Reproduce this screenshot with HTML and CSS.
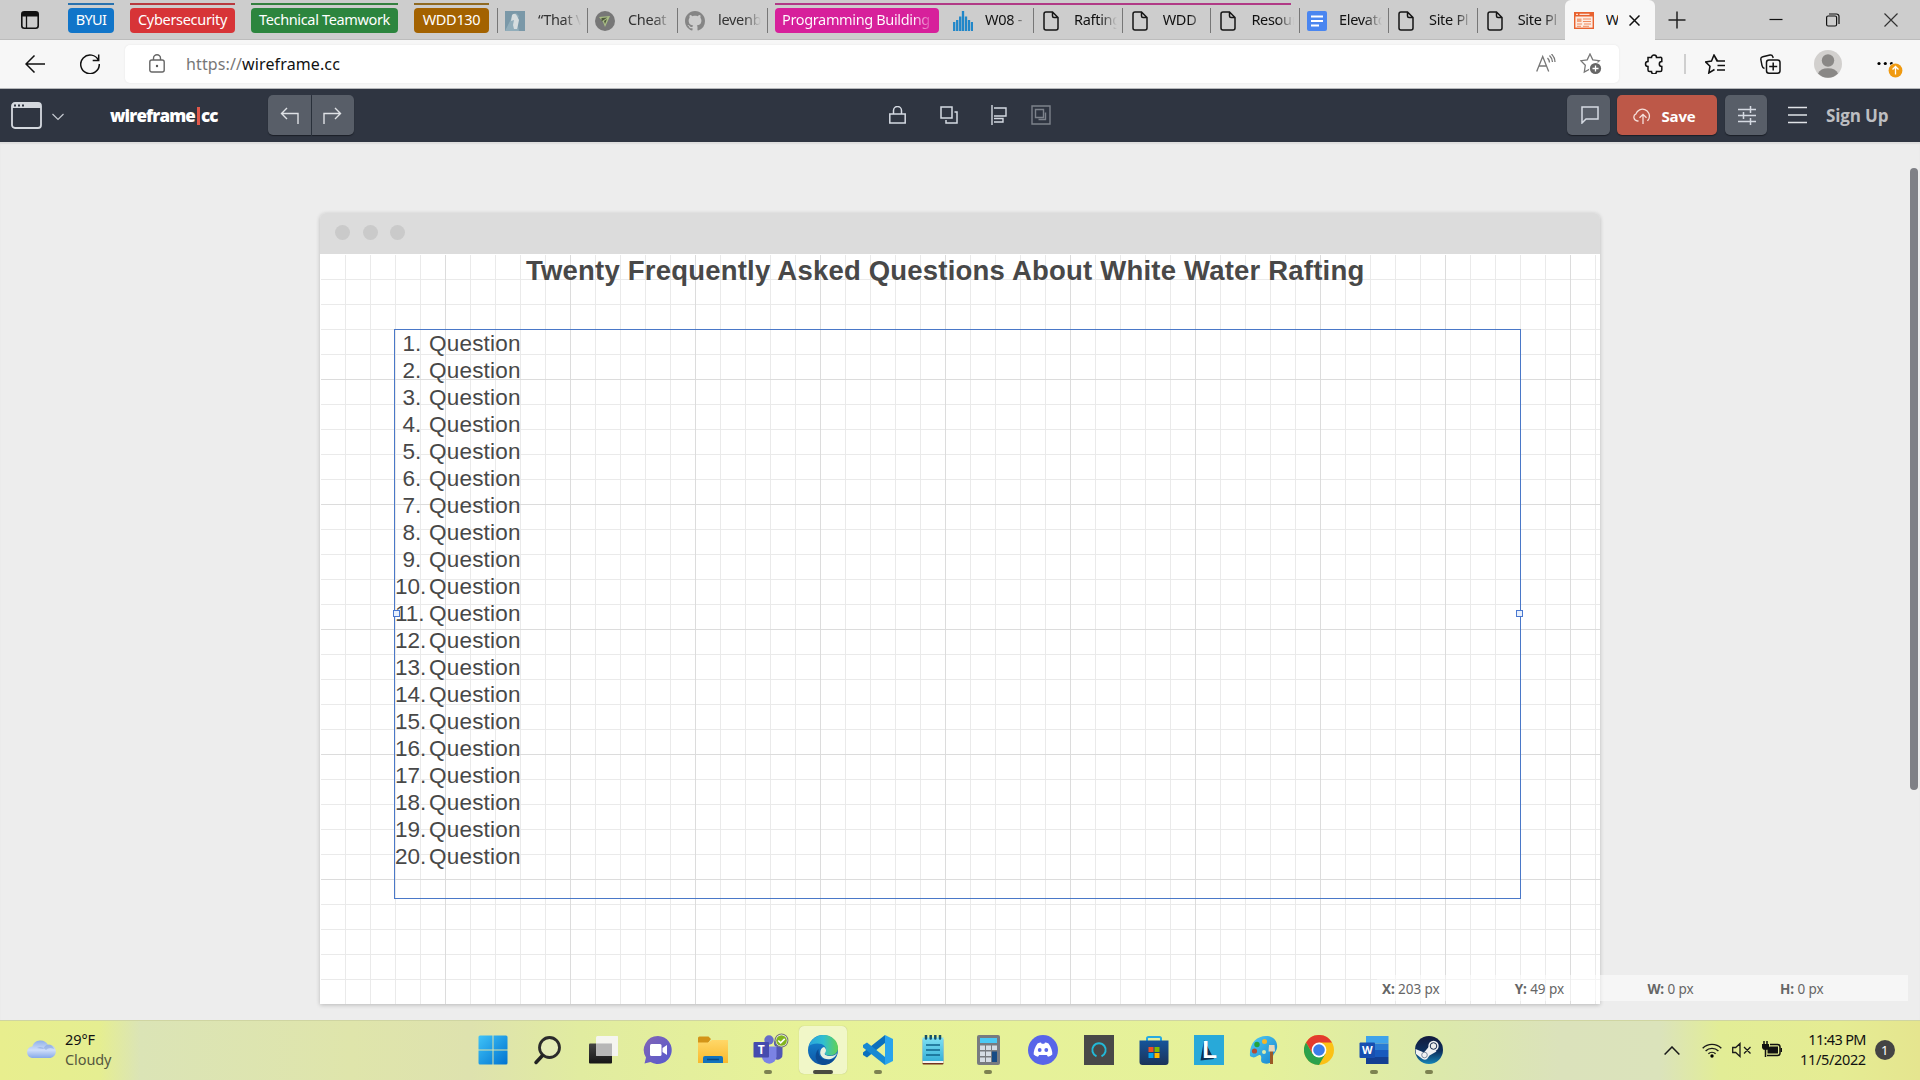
FILE: index.html
```html
<!DOCTYPE html>
<html lang="en">
<head>
<meta charset="utf-8">
<title>Wireframe.cc</title>
<link rel="stylesheet" href="styles.css">
</head>
<body>
<svg width="0" height="0" class="defs" aria-hidden="true">
  <defs>
    <symbol id="page" viewBox="0 0 16 20"><path d="M3 1h6.500L15 6.500V17a2 2 0 0 1-2 2H3a2 2 0 0 1-2-2V3a2 2 0 0 1 2-2zM9.500 1v4a1.500 1.500 0 0 0 1.500 1.500h4" fill="none" stroke="#151515" stroke-width="1.500"/></symbol>
    <linearGradient id="gWin" x1="0" y1="0" x2="1" y2="1"><stop offset="0" stop-color="#3fc3f8"/><stop offset="1" stop-color="#0073d0"/></linearGradient>
    <linearGradient id="gDark" x1="0" y1="0" x2="0" y2="1"><stop offset="0" stop-color="#444"/><stop offset="1" stop-color="#161616"/></linearGradient>
    <linearGradient id="gCloud" x1="0" y1="0" x2="0" y2="1"><stop offset="0" stop-color="#8fb0e8"/><stop offset=".55" stop-color="#cfdefa"/><stop offset="1" stop-color="#86a9ea"/></linearGradient>
    <linearGradient id="gChat" x1="0" y1="0" x2="1" y2="1"><stop offset="0" stop-color="#8366b5"/><stop offset="1" stop-color="#5558cf"/></linearGradient>
    <linearGradient id="gFolder" x1="0" y1="0" x2="0" y2="1"><stop offset="0" stop-color="#ffd768"/><stop offset="1" stop-color="#f9b92c"/></linearGradient>
    <linearGradient id="gEdge1" x1="0" y1="0" x2="1" y2="0"><stop offset="0" stop-color="#2aa5dd"/><stop offset=".5" stop-color="#30bfd0"/><stop offset="1" stop-color="#62d152"/></linearGradient>
    <linearGradient id="gEdge2" x1="0" y1="0" x2="0" y2="1"><stop offset="0" stop-color="#1689d4"/><stop offset="1" stop-color="#0f56a5"/></linearGradient>
    <linearGradient id="gNote" x1="0" y1="0" x2="0" y2="1"><stop offset="0" stop-color="#7fe0f3"/><stop offset="1" stop-color="#36b0d8"/></linearGradient>
    <linearGradient id="gStore" x1="0" y1="0" x2="0" y2="1"><stop offset="0" stop-color="#15549b"/><stop offset="1" stop-color="#1b3359"/></linearGradient>
    <linearGradient id="gPaint" x1="0" y1="0" x2="1" y2="1"><stop offset="0" stop-color="#52cdf2"/><stop offset="1" stop-color="#1483cf"/></linearGradient>
    <linearGradient id="gSteam" x1="0" y1="0" x2="0" y2="1"><stop offset="0" stop-color="#131a3c"/><stop offset=".55" stop-color="#0c2f5e"/><stop offset="1" stop-color="#1585b8"/></linearGradient>
  </defs>
</svg>

<header class="tabs">
  <svg class="tabs-menu" width="18" height="18" viewBox="0 0 18 18"><rect x=".8" y=".8" width="16.400" height="16.400" rx="2.500" fill="none" stroke="#111" stroke-width="1.600"/><path d="M1 1h16v4.500H1z" fill="#111"/><path d="M5.500 5v12" stroke="#111" stroke-width="1.300"/></svg>
  <div class="group blue"><span>BYUI</span></div>
  <div class="group red"><span>Cybersecurity</span></div>
  <div class="group green"><span>Technical Teamwork</span></div>
  <div class="group gold"><span>WDD130</span></div>
  <div class="tab dim first">
    <svg width="20" height="20" viewBox="0 0 20 20"><rect width="20" height="20" fill="#7a98a8"/><path d="M0 20L8 4l3-2 3 3-2 5 2 10z" fill="#91adba"/><path d="M7 4q3-3 5 1l2 4-1 5-1 4H9l-1-4 1-5-3 1z" fill="#d6dddf"/></svg>
    <span>“That V</span>
  </div>
  <div class="tab dim">
    <svg width="20" height="20" viewBox="0 0 20 20"><circle cx="10" cy="10" r="10" fill="#777"/><path d="M4 6l11-1-5 11-2-5z" fill="#a9bd86"/><path d="M6.500 7l6-.5-6 4zM9 10l3-2-2 5z" fill="#4f5a3d"/></svg>
    <span>Cheat</span>
  </div>
  <div class="tab dim">
    <svg width="20" height="20" viewBox="0 0 16 16"><path fill="#858585" d="M8 0C3.580 0 0 3.580 0 8c0 3.540 2.290 6.530 5.470 7.590.4.070.55-.17.55-.38 0-.19-.01-.82-.01-1.490-2.010.37-2.530-.49-2.690-.94-.09-.23-.48-.94-.82-1.130-.28-.15-.68-.52-.01-.53.63-.01 1.080.58 1.230.82.72 1.210 1.870.87 2.330.66.070-.52.28-.87.51-1.070-1.780-.2-3.640-.89-3.640-3.950 0-.87.31-1.590.82-2.150-.08-.2-.36-1.020.08-2.120 0 0 .67-.21 2.200.82.64-.18 1.320-.27 2-.27s1.360.09 2 .27c1.530-1.040 2.200-.82 2.200-.82.44 1.100.16 1.920.08 2.120.51.56.82 1.270.82 2.150 0 3.070-1.870 3.750-3.650 3.950.29.25.54.73.54 1.480 0 1.070-.01 1.930-.01 2.200 0 .21.15.46.55.38A8.010 8.010 0 0 0 16 8c0-4.420-3.580-8-8-8z"/></svg>
    <span>levenb</span>
  </div>
  <div class="pink-run">
    <div class="group pink"><span>Programming Building</span></div>
    <div class="tab short">
      <svg width="20" height="20" viewBox="0 0 20 20"><path d="M1.200 20v-9M4.200 20V9M7.200 20V5.500M10 20V0M13 20V5.500M16 20V9M19 20v-9" stroke="#2187c9" stroke-width="2.300"/></svg>
      <span>W08 -</span>
    </div>
    <div class="tab doc"><svg width="16" height="20"><use href="#page"/></svg><span>Rafting</span></div>
    <div class="tab doc"><svg width="16" height="20"><use href="#page"/></svg><span>WDD</span></div>
    <div class="tab doc"><svg width="16" height="20"><use href="#page"/></svg><span>Resour</span></div>
  </div>
  <div class="tab google">
    <svg width="20" height="20" viewBox="0 0 20 20"><rect width="20" height="20" rx="2" fill="#4a86f0"/><path d="M4 5.500h12M4 10h12M4 14.500h8" stroke="#fff" stroke-width="2"/></svg>
    <span>Elevato</span>
  </div>
  <div class="tab doc"><svg width="16" height="20"><use href="#page"/></svg><span>Site Pl</span></div>
  <div class="tab doc last"><svg width="16" height="20"><use href="#page"/></svg><span>Site Pl</span></div>
  <div class="tab-active">
    <svg width="20" height="17" viewBox="0 0 20 17"><rect x=".7" y=".7" width="18.600" height="15.600" fill="#fdebe2" stroke="#e8622f" stroke-width="1.400"/><path d="M0 0h20v4.500H0z" fill="#e8622f"/><path d="M2 2.300h2M5.500 2.300h10" stroke="#fff" stroke-width="1"/><path d="M3 6.500h4.500V10H3z" fill="#f3a27c"/><path d="M9 7h8M9 9.500h8M3 12h5M10 12h7M3 14.300h4M9 14.300h6" stroke="#f08a5e"/></svg>
    <span>W</span>
    <svg width="11" height="11" viewBox="0 0 11 11"><path d="M.5.5l10 10M10.500.5l-10 10" stroke="#111" stroke-width="1.500"/></svg>
  </div>
  <svg class="plus" width="18" height="18" viewBox="0 0 18 18"><path d="M9 .5v17M.5 9h17" stroke="#222" stroke-width="1.500"/></svg>
  <svg class="win-min" width="14" height="14" viewBox="0 0 14 14"><path d="M.5 6.500h13" stroke="#111" stroke-width="1.200"/></svg>
  <svg class="win-max" width="14" height="14" viewBox="0 0 14 14"><rect x=".6" y="3" width="10" height="10" rx="1.500" fill="none" stroke="#111" stroke-width="1.200"/><path d="M3 1h7.500A2.500 2.500 0 0 1 13 3.500V11" fill="none" stroke="#111" stroke-width="1.200"/></svg>
  <svg class="win-close" width="14" height="14" viewBox="0 0 14 14"><path d="M.5.5l13 13M13.500.5l-13 13" stroke="#333" stroke-width="1.200"/></svg>
</header>

<nav class="toolbar">
  <svg class="back" width="20" height="18" viewBox="0 0 20 18"><path d="M20 9H1M9.500.5L1 9l8.500 8.500" fill="none" stroke="#111" stroke-width="1.500"/></svg>
  <svg class="reload" width="20" height="20" viewBox="0 0 20 20"><path d="M18.500 6.500A9.300 9.300 0 1 0 19.300 10M18.700.5v6h-6" fill="none" stroke="#111" stroke-width="1.500"/></svg>
  <div class="address">
    <svg width="16" height="19" viewBox="0 0 16 19"><rect x=".8" y="6" width="14.400" height="12" rx="2" fill="none" stroke="#666" stroke-width="1.400"/><path d="M4.500 6V4.300a3.500 3.500 0 0 1 7 0V6" fill="none" stroke="#666" stroke-width="1.400"/><circle cx="8" cy="12" r="1.200" fill="#555"/></svg>
    <span class="url"><i>https://</i>wireframe.cc</span>
    <svg class="read" width="20" height="18" viewBox="0 0 20 18"><path d="M.7 17.500L6.700 2.500l6 15M3 12h7.500M11.500 4q2 2 2 4.500M13.500 1.500q3 3 3 6.500M15.500 0q3.500 3.500 3.500 8" fill="none" stroke="#777" stroke-width="1.300"/></svg>
    <svg class="addstar" width="22" height="22" viewBox="0 0 22 22"><path d="M10 1l2.800 5.800 6.500.9-4.700 4.600 1 6.500L10 16l-5.700 3 1-6.700L.8 7.700l6.400-.9z" fill="none" stroke="#777" stroke-width="1.300"/><circle cx="15.500" cy="15.500" r="6.600" fill="#fff"/><circle cx="15.500" cy="15.500" r="5.600" fill="#666"/><path d="M15.500 12.500v6M12.500 15.500h6" stroke="#fff" stroke-width="1.300"/></svg>
  </div>
  <svg class="puzzle" width="20" height="20" viewBox="0 0 20 20"><path d="M4 3.500h3.500a2.500 2.500 0 0 1 5 0H15.500A1.500 1.500 0 0 1 17.800 5V7.500a2.500 2.500 0 0 0 0 5V16a1.500 1.500 0 0 1-1.500 1.500h-3.800a2.500 2.500 0 0 1-5 0H5.500A1.500 1.500 0 0 1 4 16v-3.500a2.500 2.500 0 0 1 0-5z" fill="none" stroke="#111" stroke-width="1.500"/></svg>
  <div class="divider"></div>
  <svg class="favs" width="20" height="20" viewBox="0 0 20 20"><path d="M12.500 7L9 1 6.500 7l-6 .9L5 12.200 3.800 19l5.700-3.500M9 1.200l3 5.800h8M12.500 11.500H20M12 16h8" fill="none" stroke="#111" stroke-width="1.500"/></svg>
  <svg class="coll" width="21" height="20" viewBox="0 0 21 20"><path d="M4.500 14.500Q2.500 14 2 11.500L.8 5.500Q.5 3.200 2.800 2.700L10 1q2.300-.3 2.800 1.800L13.200 4" fill="none" stroke="#111" stroke-width="1.400"/><rect x="6.500" y="6" width="13.500" height="13.200" rx="2.500" fill="#f7f7f7" stroke="#111" stroke-width="1.500"/><path d="M13.200 8.500v8M9.200 12.500h8" stroke="#111" stroke-width="1.500"/></svg>
  <svg class="avatar" width="28" height="28" viewBox="0 0 28 28"><circle cx="14" cy="14" r="14" fill="#d2d0ce"/><circle cx="14" cy="10.500" r="6.200" fill="#8a8886"/><path d="M4 23.500a10.500 7.500 0 0 1 20 0A14 14 0 0 1 4 23.500z" fill="#8a8886"/></svg>
  <svg class="more" width="28" height="28" viewBox="0 0 28 28"><circle cx="3" cy="13.500" r="1.600"/><circle cx="9.300" cy="13.500" r="1.600"/><circle cx="15.500" cy="13.500" r="1.600"/><circle cx="19.500" cy="20.500" r="7.600" fill="#f7f7f7"/><circle cx="19.500" cy="20.500" r="6.900" fill="#f09a10"/><path d="M19.500 24.500v-7.500M16.500 19.500l3-3 3 3" fill="none" stroke="#fff" stroke-width="1.300"/></svg>
</nav>

<div class="appbar">
  <svg class="frame" width="31" height="27" viewBox="0 0 31 27"><rect x="1" y="1" width="29" height="25" rx="3" fill="none" stroke="#d5d9df" stroke-width="1.800"/><path d="M1 2h29v4H1z" fill="#d5d9df"/><path d="M3 3.500h2M7 3.500h2M11 3.500h2" stroke="#2f3541" stroke-width="2"/></svg>
  <svg class="caret" width="12" height="8" viewBox="0 0 12 8"><path d="M.5 1L6 6.500 11.500 1" fill="none" stroke="#c5c9d0" stroke-width="1.200"/></svg>
  <div class="brand">wireframe<b></b>cc</div>
  <div class="history">
    <button><svg width="19" height="17" viewBox="0 0 19 17"><path d="M18 17V6.500H1.500M7 1L1.500 6.500 7 12" fill="none" stroke="#dfe2e6" stroke-width="1.400"/></svg></button>
    <button><svg width="19" height="17" viewBox="0 0 19 17"><path d="M1 17V6.500h16.500M12 1l5.500 5.500L12 12" fill="none" stroke="#dfe2e6" stroke-width="1.400"/></svg></button>
  </div>
  <svg class="lock" width="17" height="18" viewBox="0 0 17 18"><path d="M.8 8h15.400v9H.8zM4.500 8V4.500a4 4 0 0 1 8 0V8" fill="none" stroke="#d5dae2" stroke-width="1.500"/></svg>
  <svg class="dup" width="18" height="18" viewBox="0 0 18 18"><path d="M1 1h11v11H1zM14.500 6H17v11H6v-3" fill="none" stroke="#d5dae2" stroke-width="1.500"/></svg>
  <svg class="align" width="16" height="20" viewBox="0 0 16 20"><path d="M1 0v20M3 3h12v8H3M3 17h9v-3.500H3" fill="none" stroke="#d5dae2" stroke-width="1.400"/></svg>
  <svg class="grp" width="20" height="20" viewBox="0 0 20 20"><path d="M1 1h18v18H1zM4.500 4.500h8v8h-8zM14.500 7.500v7h-7" fill="none" stroke="#7d828b" stroke-width="1.400"/></svg>
  <button class="btn comment"><svg width="18" height="18" viewBox="0 0 18 18"><path d="M1 1h16v12H5l-4 4z" fill="none" stroke="#d5dae2" stroke-width="1.500"/></svg></button>
  <button class="btn save"><svg width="20" height="17" viewBox="0 0 20 17"><path d="M5.500 14H4.500A3.800 3.800 0 0 1 3 6.800 6.800 6.800 0 1 1 16 11.500L14.500 14M10 17V7.500M6.500 10.800L10 7.300l3.500 3.500" fill="none" stroke="#f6e1dc" stroke-width="1.300"/></svg><span>Save</span></button>
  <button class="btn sliders"><svg width="18" height="19" viewBox="0 0 18 19"><path d="M0 3.500h18M0 9.500h18M0 15.500h18M12.500 0v7M5.500 6v7M12.500 12v7" stroke="#d5dae2" stroke-width="1.500"/></svg></button>
  <svg class="burger" width="19" height="18" viewBox="0 0 19 18"><path d="M0 1.500h19M0 9h19M0 16.500h19" stroke="#e0e3e7" stroke-width="1.600"/></svg>
  <span class="signup">Sign Up</span>
</div>

<main class="workspace">
  <section class="mock">
    <div class="mock-bar"><i></i><i></i><i></i></div>
    <div class="grid">
      <h1>Twenty Frequently Asked Questions About White Water Rafting</h1>
      <div class="selection">
        <ol>
          <li><b>1.</b>Question</li><li><b>2.</b>Question</li><li><b>3.</b>Question</li><li><b>4.</b>Question</li>
          <li><b>5.</b>Question</li><li><b>6.</b>Question</li><li><b>7.</b>Question</li><li><b>8.</b>Question</li>
          <li><b>9.</b>Question</li><li class="wide"><b>10.</b>Question</li><li class="wide"><b>11.</b>Question</li><li class="wide"><b>12.</b>Question</li>
          <li class="wide"><b>13.</b>Question</li><li class="wide"><b>14.</b>Question</li><li class="wide"><b>15.</b>Question</li><li class="wide"><b>16.</b>Question</li>
          <li class="wide"><b>17.</b>Question</li><li class="wide"><b>18.</b>Question</li><li class="wide"><b>19.</b>Question</li><li class="wide"><b>20.</b>Question</li>
        </ol>
        <i class="handle left"></i><i class="handle right"></i>
      </div>
    </div>
  </section>
  <div class="scrollbar"></div>
  <div class="status">
    <span><b>X:</b> 203 px</span><span><b>Y:</b> 49 px</span><span><b>W:</b> 0 px</span><span><b>H:</b> 0 px</span>
  </div>
</main>

<footer class="taskbar">
  <div class="weather">
    <svg width="31" height="20" viewBox="0 0 31 20"><path d="M6 19a5.800 5.800 0 0 1 .3-11.500A8.500 8.500 0 0 1 22 6a6.600 6.600 0 0 1 2.500 13z" fill="url(#gCloud)"/><path d="M11 9q5-3 9 2 3-3.500 8-1-2-5-6-4.500-4 1-4.500 4.500" fill="#7f9fdd" opacity=".5"/></svg>
    <div><p>29°F</p><p class="soft">Cloudy</p></div>
  </div>
  <div class="apps">
    <div class="app"><svg viewBox="0 0 30 30"><path d="M.5 2a1.500 1.500 0 0 1 1.500-1.500h12.500v14H.5zM15.500.5H28A1.500 1.500 0 0 1 29.500 2v12.500h-14zM.5 15.500h14v14H2A1.500 1.500 0 0 1 .5 28zM15.500 15.500h14V28a1.500 1.500 0 0 1-1.500 1.500H15.500z" fill="url(#gWin)"/></svg></div>
    <div class="app"><svg viewBox="0 0 30 30"><circle cx="16.500" cy="12.500" r="10" fill="#e6ecc4" fill-opacity=".6" stroke="#2b2b2b" stroke-width="2.800"/><path d="M9.500 20.500L3 27.500" stroke="#222" stroke-width="3.500" stroke-linecap="round"/></svg></div>
    <div class="app"><svg viewBox="0 0 30 30"><rect x="1" y="8.500" width="23" height="20" rx="1" fill="url(#gDark)"/><rect x="8" y="1" width="22.500" height="20" rx="1.500" fill="#f5f5f5" opacity=".94"/><path d="M8 8.500h16V21H9.500A1.500 1.500 0 0 1 8 19.500z" fill="#b7b7b7"/></svg></div>
    <div class="app"><svg viewBox="0 0 30 30"><path d="M15 1a14 14 0 1 1-7.500 26L1.500 28.500 3 22.500A14 14 0 0 1 15 1z" fill="url(#gChat)"/><rect x="7" y="9" width="11.500" height="12" rx="1.500" fill="#fff"/><path d="M19.500 13l4.500-3v10l-4.500-3z" fill="#fff"/></svg></div>
    <div class="app"><svg viewBox="0 0 30 30"><path d="M0 3a1.500 1.500 0 0 1 1.500-1.500h9L13 4l-3 4H0z" fill="#d39418"/><path d="M0 7.500h10l4-2.500h16v23H0z" fill="url(#gFolder)"/><path d="M5 28v-5a2 2 0 0 1 2-2h16a2 2 0 0 1 2 2v5z" fill="#1273bd"/><path d="M9 24.500h12" stroke="#0a477f" stroke-width="1.500"/></svg></div>
    <div class="app run"><svg viewBox="0 0 30 30"><circle cx="16" cy="5" r="4.700" fill="#666cc8"/><circle cx="25" cy="8" r="4" fill="#5058b4"/><path d="M22 12h7.500v7a5 5 0 0 1-7.500 5z" fill="#5157b5"/><path d="M9 11.500h14.500v10a7.200 7.200 0 0 1-14.500 0z" fill="#7b83e4"/><rect x=".5" y="7" width="15.500" height="15.500" rx="1" fill="#454bae"/><text x="8.200" y="19" class="t-letter">T</text></svg><svg class="presence" viewBox="0 0 14 14"><circle cx="7" cy="7" r="6" fill="#fff" stroke="#777" stroke-width="1"/><circle cx="7" cy="7" r="5" fill="#82b41e"/><path d="M4 7l2.200 2.200L10 5.500" fill="none" stroke="#fff" stroke-width="1.500"/></svg></div>
    <div class="app run current"><svg viewBox="0 0 30 30"><circle cx="15" cy="15" r="15" fill="url(#gEdge2)"/><path d="M1 11C3 4 9 0 15.500 0 24 0 30 6 30 13c0 5-4 7.500-8 7.500-4 0-5.500-1.500-5-2.500 1.500-2 2-7-3.500-9C8.500 7.500 3 9 1 11z" fill="url(#gEdge1)"/><path d="M10.500 14c-1 9 6 13.500 16.500 9.500C24 28 20 30 15 30 8 29 5 20 10.500 14z" fill="#0c4b94"/><path d="M16 12c3 2 2 5 1 6-1 1 .5 3 5.500 3 3 0 5-1 6.700-3-2.500 6-8.500 7.500-13 5.500-5.500-2.500-5-10-.2-11.500z" fill="#e6f0e0"/></svg></div>
    <div class="app run"><svg viewBox="0 0 30 30"><path d="M22 0l8 4v22l-8 4z" fill="#29a4ed"/><path d="M22 0v8L4 22.500 0 20v-2.500z" fill="#0b70bd"/><path d="M22 30v-8L4 7.500 0 10v2.500z" fill="#1689d3"/></svg></div>
    <div class="app"><svg viewBox="0 0 30 30"><rect x="4.500" y="4" width="21" height="25.500" rx="1" fill="#74321e"/><rect x="4.500" y="3" width="21" height="25" fill="#f4f4f0"/><path d="M4.500 2.500h21v23.500h-21z" fill="url(#gNote)"/><path d="M8 10h14M8 15h14M8 20h14" stroke="#11648c" stroke-width="1.600"/><path d="M8 .5v3M12.700.5v3M17.300.5v3M22 .5v3" stroke="#174f67" stroke-width="2.500" stroke-linecap="round"/></svg></div>
    <div class="app run"><svg viewBox="0 0 30 30"><rect x="4" width="23" height="30" rx="2" fill="#777b80"/><path d="M7 3h17v5H7z" fill="#4bc9f4"/><path d="M7 10.500h5v4.500H7zM13 10.500h5v4.500h-5zM19 10.500h5v4.500h-5zM7 16.500h5V21H7zM13 16.500h5V21h-5zM7 22.500h5V27H7zM13 22.500h5V27h-5z" fill="#d5dce4"/><path d="M19 16.500h5V27h-5z" fill="#164b85"/></svg></div>
    <div class="app"><svg viewBox="0 0 30 30"><circle cx="15" cy="15" r="15" fill="#5865e9"/><path d="M9.500 8.500q2-1 3.500-1l.7 1.200h2.600L17 7.500q1.800 0 3.500 1 4 5.500 3.800 11-2 1.800-4.300 2.200L18.800 20h-7.600L10 21.700Q7.700 21.300 5.700 19.500q-.2-5.500 3.800-11z" fill="#fff"/><ellipse cx="11.700" cy="15" rx="1.900" ry="2.100" fill="#5865e9"/><ellipse cx="18.300" cy="15" rx="1.900" ry="2.100" fill="#5865e9"/></svg></div>
    <div class="app"><svg viewBox="0 0 30 30"><path d="M0 0h30v30H0z" fill="#484848"/><path d="M12.500 21.200a6.700 6.700 0 1 1 5 0" fill="none" stroke="#22b9d8" stroke-width="2"/></svg></div>
    <div class="app"><svg viewBox="0 0 30 30"><path d="M8 7V3.500A1.500 1.500 0 0 1 9.500 2h11A1.500 1.500 0 0 1 22 3.500V7" fill="none" stroke="#27aae1" stroke-width="2"/><path d="M.5 5.500h29V27a3 3 0 0 1-3 3h-23a3 3 0 0 1-3-3z" fill="url(#gStore)"/><path d="M9.500 12h5v5h-5z" fill="#f25022"/><path d="M15.500 12h5v5h-5z" fill="#7fba00"/><path d="M9.500 18h5v5h-5z" fill="#00a4ef"/><path d="M15.500 18h5v5h-5z" fill="#ffb900"/></svg></div>
    <div class="app"><svg viewBox="0 0 30 30"><path d="M0 0h30v30H0z" fill="#28a9d9"/><path d="M10 5L6.500 25.500 20 24z" fill="#0b3157"/><text x="8.300" y="22.500" class="l-letter">L</text></svg></div>
    <div class="app"><svg viewBox="0 0 30 30"><path d="M1 21C0 8 8 1 17 1c8 0 12 6 11 12-1 5-5 6-4 11 0 4-6 6-10 4-4-2 0-6-3-8-3-1-4 5-10 1z" fill="url(#gPaint)"/><circle cx="8" cy="9.500" r="2.700" fill="#25a33b"/><circle cx="15.500" cy="6.500" r="2.500" fill="#f4b62a"/><circle cx="5.500" cy="16" r="2.600" fill="#b44b34"/><circle cx="15" cy="17" r="2" fill="#dcebad"/><path d="M22.500 16v13" stroke="#9b5926" stroke-width="3"/><path d="M20 10h5.500l.5 6.500h-6.500z" fill="#e5d7bd"/></svg></div>
    <div class="app"><svg viewBox="0 0 30 30"><circle cx="15" cy="15" r="15" fill="#fbc116"/><path d="M2 7.500A15 15 0 0 1 28 7.500H15L8.500 18.700z" fill="#e33b2e"/><path d="M2 7.500l6.500 11.200 13 0L15 30A15 15 0 0 1 2 7.500z" fill="#2ba24c"/><circle cx="15" cy="15" r="7.400" fill="#fff"/><circle cx="15" cy="15" r="5.800" fill="#3b7de9"/></svg></div>
    <div class="app run"><svg viewBox="0 0 30 30"><path d="M7 1h22.500v7.500H7z" fill="#3fa3ea"/><path d="M7 8.500h22.500V15H7z" fill="#2a7cd3"/><path d="M7 15h22.500v7H7z" fill="#185abd"/><path d="M7 22h22.500v7H7z" fill="#133f92"/><rect x=".5" y="7.500" width="15.500" height="15.500" rx="1" fill="#174fb0"/><text x="8.200" y="19" class="w-letter">W</text></svg></div>
    <div class="app run"><svg viewBox="0 0 30 30"><circle cx="15" cy="15" r="14" fill="url(#gSteam)"/><path d="M1.500 14l8.500 3.500 5-6 7.500 5-7 4-2.500 3.500q-2 1.500-4.500 0L2 19z" fill="#f0f1f3"/><circle cx="19.500" cy="11" r="5.200" fill="#f0f1f3"/><circle cx="19.500" cy="11" r="3.300" fill="#eee" stroke="#1b2e50" stroke-width="1"/><circle cx="10.500" cy="20" r="2.800" fill="none" stroke="#50657f" stroke-width=".7"/></svg></div>
  </div>
  <div class="tray">
    <svg width="16" height="9" viewBox="0 0 16 9"><path d="M.6 8.500L8 1l7.400 7.500" fill="none" stroke="#1a1a1a" stroke-width="1.500"/></svg>
    <svg class="wifi" width="20" height="16" viewBox="0 0 20 16"><path d="M.7 6.300a13 13 0 0 1 18.600 0M3.600 9a9 9 0 0 1 12.800 0M6.400 11.800a5.200 5.200 0 0 1 7.200 0" fill="none" stroke="#1a1a1a" stroke-width="1.400"/><circle cx="10" cy="14" r="1.700"/></svg>
    <svg class="sound" width="20" height="16" viewBox="0 0 20 16"><path d="M.7 5.500h3L8 1.500v13l-4.300-4h-3zM12 5l6.500 6.500M18.500 5L12 11.500" fill="none" stroke="#1a1a1a" stroke-width="1.300"/></svg>
    <svg class="batt" width="21" height="17" viewBox="0 0 21 17"><path d="M8 3.500h7.500A2.500 2.500 0 0 1 18 6v6a2.500 2.500 0 0 1-2.500 2.500H5" fill="none" stroke="#111" stroke-width="1.500"/><path d="M7.500 5.500h8.500v7H5.500V9zM18.500 7H20v4h-1.500zM0 3h7v3.500Q6.500 9 3.500 9T0 6.500z" fill="#111"/><path d="M2 0v4M5 0v4M3.500 8v8" stroke="#111" stroke-width="1.500"/></svg>
    <div class="clock"><p class="time">11:43 PM</p><p>11/5/2022</p></div>
    <span class="count">1</span>
  </div>
</footer>
</body>
</html>
```
FILE: styles.css
```css
* { box-sizing: border-box; }
body {
  margin: 0;
  width: 1920px;
  height: 1080px;
  overflow: hidden;
  display: flex;
  flex-direction: column;
  font-family: "Noto Sans", "Open Sans", sans-serif;
  color: #111;
}
p, h1, ol { margin: 0; padding: 0; }
svg { display: block; flex: none; }
.defs { position: absolute; }
button { border: 0; padding: 0; font: inherit; display: flex; align-items: center; justify-content: center; }

/* tab strip */
.tabs { height: 40px; flex: none; display: flex; align-items: flex-start; background: #cdcdcd; border-bottom: 1px solid #bcbcbc; }
.tabs > svg { margin-top: 11px; }
.tabs-menu { margin-left: 21px; margin-right: 29px; }
.group { height: 30px; margin-top: 3px; padding-top: 3px; margin-right: 16px; border-top: 2px solid; flex: none; }
.group span { display: block; height: 25px; line-height: 23px; border-radius: 4px; color: #fff; text-align: center; font-size: 14.500px; letter-spacing: -.3px; white-space: nowrap; overflow: hidden; }
.blue { width: 46px; border-color: #2a72ae; } .blue span { background: #1175c9; letter-spacing: -.7px; }
.red { width: 105px; border-color: #b83a3f; } .red span { background: #d73437; }
.green { width: 147px; border-color: #34803f; } .green span { background: #2c853e; letter-spacing: -.35px; }
.gold { width: 75px; border-color: #8f6a22; margin-right: 8px; } .gold span { background: #a36200; }
.pink { width: 164px; margin: 0 4px 0 0; border: 0; padding-top: 3px; height: 28px; }
.pink span { padding-left: 7px; text-align: left; color: transparent; background-image: linear-gradient(90deg, #fff 138px, #d7209b 160px), linear-gradient(#d7209b, #d7209b); background-clip: text, border-box; -webkit-background-clip: text, border-box; letter-spacing: -.35px; }
.pink-run { display: flex; margin: 3px 0 0 7px; border-top: 2px solid #b13a86; width: 516px; flex: none; height: 30px; }
.pink-run .tab { margin-top: 3px; }
.tab { width: 90px; height: 25px; margin-top: 8px; flex: none; display: flex; align-items: center; border-right: 1px solid #777; padding-left: 7px; }
.tab span { width: 43px; margin-left: 13px; overflow: hidden; white-space: nowrap; font-size: 14.500px; letter-spacing: -.3px; line-height: 25px; margin-top: -3px; -webkit-mask-image: linear-gradient(90deg, #000 26px, transparent 43px); mask-image: linear-gradient(90deg, #000 26px, transparent 43px); }
.tab.first { border-left: 1px solid #777; width: 91px; }
.tab.dim span { color: #333; }
.tab.short { padding-left: 10px; width: 91px; }
.tab.short span { margin-left: 12px; }
.tab.doc { width: 88.700px; padding-left: 9px; }
.tab.doc span { margin-left: 15px; }
.tab.google { width: 89px; margin-left: 9px; }
.tab.google span { margin-left: 12px; }
.tab.last { border-right: 0; width: 87px; }
.tab-active { width: 90px; height: 40px; background: #f7f7f7; border-radius: 6px 6px 0 0; display: flex; align-items: center; padding-left: 9px; flex: none; margin-right: 13px; }
.tab-active span { width: 12px; overflow: hidden; margin: -3px 11px 0 12px; font-size: 14.500px; }
.win-min { margin-left: 83px; } .win-max { margin-left: 43px; } .win-close { margin-left: 44px; }
.tabs > .win-min, .tabs > .win-max, .tabs > .win-close { margin-top: 13px; }

/* address row */
.toolbar { height: 49px; flex: none; display: flex; align-items: center; background: #f7f7f7; border-bottom: 1px solid #b5b7ba; padding-bottom: 1px; }
.back { margin-left: 25px; } .reload { margin-left: 35px; }
.address { width: 1494px; height: 38px; margin-left: 25px; background: #fff; border-radius: 5px; display: flex; align-items: center; padding-left: 24px; flex: none; box-shadow: 0 0 2px #e4e4e4; }
.url { margin-left: 21px; font-size: 16px; letter-spacing: .12px; width: 1350px; }
.url i { font-style: normal; color: #777; }
.read { margin-right: 24px; margin-top: -2px; }
.puzzle { margin-left: 25px; }
.divider { width: 2px; height: 20px; background: #cfcfcf; margin: 0 19px 0 20px; }
.coll { margin-left: 35px; } .avatar { margin-left: 33px; } .more { margin-left: 34px; }

/* editor header */
.appbar { height: 53px; flex: none; background: #2f3541; display: flex; align-items: center; padding-bottom: 1px; }
.frame { margin-left: 11px; } .caret { margin: 3px 0 0 10px; }
.brand { display: flex; align-items: center; margin-left: 46px; width: 158px; font: 800 17px "Open Sans", "Noto Sans", sans-serif; letter-spacing: -.85px; color: #fff; }
.brand b { width: 3px; height: 18px; background: #e2584a; margin: 2px 1px 0 2px; }
.history { display: flex; gap: 1px; }
.history button { width: 42.500px; height: 40px; background: #585e68; border-radius: 5px 0 0 5px; box-shadow: 0 1px 1px #1b1f27; }
.history button + button { border-radius: 0 5px 5px 0; }
.history svg { margin-top: 1px; }
.lock { margin-left: 535px; } .dup { margin-left: 34px; } .align { margin-left: 33px; } .grp { margin-left: 24px; }
.btn { height: 40px; border-radius: 5px; background: #585e68; box-shadow: 0 1px 1px #1b1f27; flex: none; }
.comment { width: 43px; margin-left: 516px; padding-left: 2px; }
.save { width: 100px; margin-left: 7px; background: #bd5848; color: #fff; font: bold 15px "Open Sans", "Noto Sans", sans-serif; gap: 9px; padding-right: 6px; }
.save span { letter-spacing: -.2px; margin-top: 2px; }
.sliders { width: 42px; margin-left: 8px; padding-left: 2px; }
.burger { margin-left: 21px; }
.signup { margin-left: 19px; font: bold 17px "Open Sans", "Noto Sans", sans-serif; letter-spacing: -.15px; color: #bdbec1; white-space: nowrap; }

/* canvas */
.workspace { flex: 1; position: relative; background: #ededed; padding: 71px 0 0 320px; box-shadow: inset 0 2px 1px #dedede; }
.mock { width: 1280px; height: 791px; box-shadow: 0 1px 4px rgba(0,0,0,.22); border-radius: 6px 6px 0 0; display: flex; flex-direction: column; }
.mock-bar { height: 41px; flex: none; background: #dcdcdc; border-radius: 6px 6px 0 0; display: flex; align-items: center; gap: 12.500px; padding: 0 0 2px 15px; }
.mock-bar i { width: 15px; height: 15px; border-radius: 50%; background: #cacaca; }
.grid {
  flex: 1;
  border-top: 1px solid #fff;
  border-left: 1px solid #fff;
  background-color: #fff;
  background-image:
    linear-gradient(90deg, transparent 124px, #dcdcdc 124px),
    linear-gradient(transparent 124px, #dcdcdc 124px),
    linear-gradient(90deg, transparent 24px, #eaeaea 24px),
    linear-gradient(transparent 24px, #eaeaea 24px);
  background-size: 125px 125px, 125px 125px, 25px 25px, 25px 25px;
  font-family: "Liberation Sans", Arial, sans-serif;
  color: #484848;
}
h1 { height: 74px; padding-left: 205px; font-size: 27.500px; line-height: 31px; letter-spacing: .21px; white-space: nowrap; }
.selection { position: relative; width: 1127px; height: 570px; margin-left: 73px; border: 1px solid #4a78c8; }
ol { list-style: none; font-size: 22.500px; line-height: 27px; letter-spacing: .2px; }
li { display: flex; }
li b { font-weight: normal; width: 34px; text-align: center; flex: none; }
.wide b { text-align: left; letter-spacing: 0; }
.handle { position: absolute; top: 280px; width: 7px; height: 7px; border: 1px solid #4a78d0; background: #e8f0fc; }
.handle.left { left: -2px; } .handle.right { right: -3px; }
.scrollbar { position: absolute; left: 1910px; top: 26px; width: 8px; height: 622px; border-radius: 4px; background: #7f8086; }
.status { position: absolute; left: 1377px; top: 833px; width: 531px; height: 26px; background: rgba(255,255,255,.5); display: grid; grid-template-columns: repeat(4, 132.700px); padding-left: 5px; font-size: 13.500px; line-height: 28px; letter-spacing: -.08px; color: #666; }

/* taskbar */
.taskbar {
  height: 60px; flex: none; display: flex; align-items: center; font-size: 14.500px; line-height: 20px; border-top: 1px solid #cfd5a2; padding-bottom: 1px;
  background: linear-gradient(90deg, #e8ee8e 0, #e5ee91 100px, #dbe4b6 140px, #dfe5ab 350px, #dee2ae 470px, #e1eca0 580px, #e7f298 800px, #e5f19a 1260px, #dce9ab 1440px, #dbe2bb 1560px, #dbe3bb 1660px, #e2ed96 1720px, #e5ec93 1840px, #e5e58f 1920px);
}
.weather { display: flex; align-items: center; width: 464px; padding: 0 0 2px 26px; gap: 8px; letter-spacing: -.1px; }
.soft { color: #56583f; }
.apps { display: flex; gap: 7.060px; }
.app { position: relative; width: 48px; height: 48px; display: flex; align-items: center; justify-content: center; border-radius: 5px; }
.app:first-child { margin-left: 5px; }
.app > svg { width: 30px; height: 30px; }
.current { background: #f1f7c8; box-shadow: 0 0 1px #aab27a; }
.run::after { content: ""; position: absolute; left: 20px; bottom: 0; width: 8px; height: 4px; border-radius: 2px; background: #7d8251; }
.current::after { left: 14px; width: 20px; background: #4a4b40; }
.app > .presence { position: absolute; width: 15px; height: 15px; left: 30px; top: 7px; }
.t-letter, .w-letter { font: bold 12px "Open Sans", sans-serif; fill: #fff; text-anchor: middle; }
.w-letter { font-size: 11px; }
.l-letter { font: bold 24px "Liberation Sans", sans-serif; fill: #fff; }
.tray { display: flex; align-items: center; margin-left: 211px; flex: none; }
.wifi { margin-left: 22px; } .sound { margin-left: 10px; } .batt { margin-left: 10px; margin-top: -1px; }
.clock { width: 83px; padding-bottom: 3px; text-align: right; letter-spacing: -.35px; white-space: nowrap; }
.time { letter-spacing: -.65px; }
.count { width: 20px; height: 20px; margin-left: 9px; border-radius: 50%; background: #444; color: #fff; font-size: 13px; text-align: center; line-height: 20px; }
```
